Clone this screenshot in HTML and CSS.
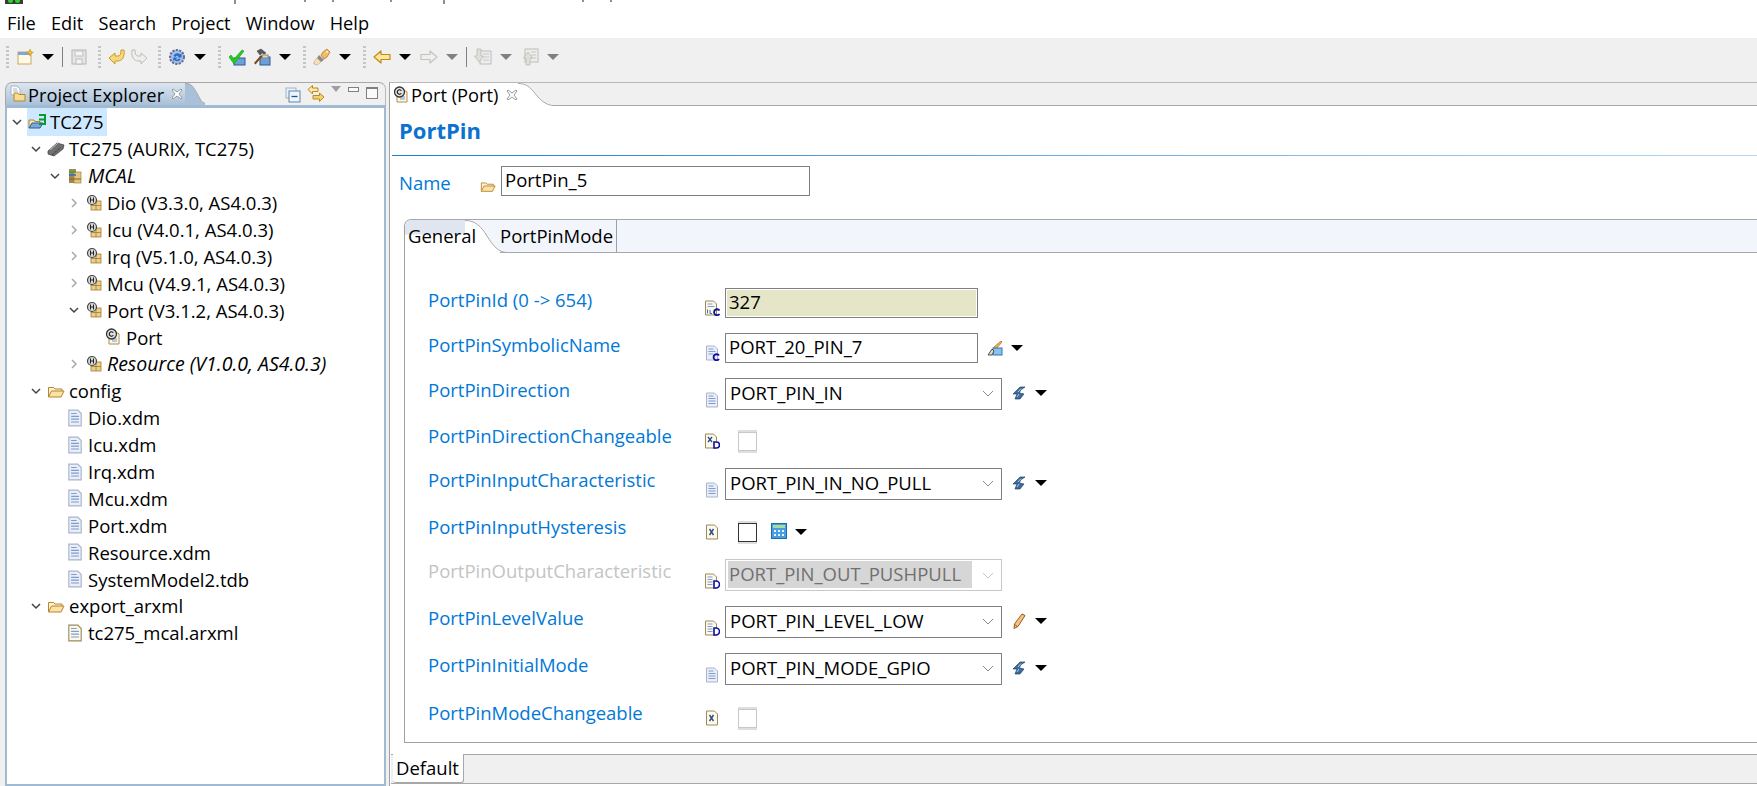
FILE: index.html
```html
<!DOCTYPE html>
<html lang="en">
<head>
<meta charset="utf-8">
<title>Port (Port)</title>
<link rel="stylesheet" href="styles.css">
</head>
<body>
<svg class="defs" aria-hidden="true">
  <defs>
    <symbol id="i-new" viewBox="0 0 18 18"><rect x="2" y="4" width="13" height="12" fill="#fff9e6" stroke="#c9a95a"/><rect x="2" y="4" width="13" height="3" fill="#7fa8d8"/><path d="M14 1l1 2.500 2.500 1-2.500 1-1 2.500-1-2.500-2.500-1 2.500-1z" fill="#f2c230" stroke="#b88a10" stroke-width=".5"/></symbol>
    <symbol id="i-save" viewBox="0 0 18 18"><rect x="2" y="2" width="14" height="14" fill="#e6e6e6" stroke="#b5b5b5"/><rect x="5" y="3" width="8" height="5" fill="#f4f4f4" stroke="#c0c0c0"/><rect x="6" y="11" width="6" height="5" fill="#f4f4f4" stroke="#bbb"/></symbol>
    <symbol id="i-undo" viewBox="0 0 18 18"><path d="M1 10l6-5v3h3c2 0 3-2 3-6h3c1 7-2 11-6 11H7v3z" fill="#f7d87a" stroke="#c99a28" stroke-linejoin="round"/></symbol>
    <symbol id="i-redo" viewBox="0 0 18 18"><path d="M17 10l-6-5v3H8C6 8 5 6 5 2H2c-1 7 2 11 6 11h3v3z" fill="#eeeeee" stroke="#bdbdb5" stroke-linejoin="round"/></symbol>
    <symbol id="i-globe" viewBox="0 0 18 18"><circle cx="9" cy="9" r="7" fill="#a8b8dc" stroke="#5c6e9c" stroke-width="2" stroke-dasharray="2.200 1.300"/><circle cx="9" cy="9" r="5.500" fill="#aebce0"/><path d="M5.500 8c1-3 5-3.500 6.500-1.500l1.500-1.200v4.200H9.300l1.300-1.300C9.600 7.300 8 7.500 7.500 9zM12.500 11c-1 2.500-4 3-6 1l-1.200 1.200V9.500h4L8 11c1 1 2.300.6 3-.5z" fill="#1f70c8"/></symbol>
    <symbol id="i-check" viewBox="0 0 18 18"><rect x="6" y="10" width="11" height="7" fill="#6f9fd8" stroke="#2c5c98"/><path d="M1 9l2-2 3 4 8-9 2 1-10 13z" fill="#22cc22" stroke="#1a9a1a" stroke-width=".6"/></symbol>
    <symbol id="i-hammer" viewBox="0 0 18 18"><rect x="7" y="9" width="10" height="8" fill="#6f9fd8" stroke="#2c5c98"/><rect x="9" y="7" width="6" height="3" fill="#e8d8b0" stroke="#888"/><path d="M1 15l7-8 1.500 1.500-7 8z" fill="#7a4a1c"/><path d="M4 3l4-2 5 4-2 1-2-1-2 2z" fill="#5a5a5a" stroke="#333" stroke-width=".5"/></symbol>
    <symbol id="i-wand" viewBox="0 0 18 18"><path d="M10 4l4-3 3 3-3 5-3 2-3-4z" fill="#f0bd68" stroke="#b87818" stroke-width=".8"/><path d="M6 7l5 5-3 2-4-4z" fill="#8a8a8a"/><path d="M4 10l4 4-4 3-3-1v-2z" fill="#f3e0c0" stroke="#b8a070" stroke-width=".6"/><circle cx="14" cy="4" r="1" fill="#fff3d0"/></symbol>
    <symbol id="i-back" viewBox="0 0 18 18"><path d="M1 9l7-6v3.500h9v5H8V15z" fill="#fbe6a0" stroke="#c08a18" stroke-width="1.200" stroke-linejoin="round"/></symbol>
    <symbol id="i-fwd" viewBox="0 0 18 18"><path d="M17 9l-7-6v3.500H1v5h9V15z" fill="#efefef" stroke="#c4c4bc" stroke-width="1.200" stroke-linejoin="round"/></symbol>
    <symbol id="i-next" viewBox="0 0 18 18"><rect x="6" y="3" width="11" height="13" fill="#ededed" stroke="#bcbcbc"/><path d="M9 6h6M9 9h6M9 12h6" stroke="#c8c8c8"/><path d="M3 1h4v7h2.500L5 14 .5 8H3z" fill="#e0e0da" stroke="#bbbbb0" stroke-width=".8"/></symbol>
    <symbol id="i-prev" viewBox="0 0 18 18"><rect x="4" y="1" width="13" height="13" fill="#ededed" stroke="#bcbcbc"/><path d="M10 4h5M10 7h5M10 10h5" stroke="#c8c8c8"/><path d="M5 17V10H2.500L7 4l4.500 6H9v7z" fill="#e0e0da" stroke="#bbbbb0" stroke-width=".8"/></symbol>
    <symbol id="i-explorer" viewBox="0 0 18 18"><path d="M2 1h6l3 3v6H2z" fill="#fff" stroke="#b0b0b8"/><path d="M4 4h4M4 6h5" stroke="#a8b8d0"/><path d="M5 8h4l1 1.500h6V16H5z" fill="#f8dc90" stroke="#b08830"/></symbol>
    <symbol id="i-folder" viewBox="0 0 18 18"><path d="M1.500 15V5.500h5l1.500 1.500h7v2" fill="#fdf3d2" stroke="#b8842c"/><path d="M1.500 15l3-6h12.500l-3 6z" fill="#fbe3a8" stroke="#b8842c" stroke-linejoin="round"/></symbol>
    <symbol id="i-project" viewBox="0 0 18 18"><path d="M1 15V7h5l1 1.500h5v2" fill="#f8e8b8" stroke="#a88434"/><path d="M1 15l3-5h11l-3 5z" fill="#7aa8dc" stroke="#2f5c98" stroke-linejoin="round"/><path d="M11 2h6v9h-6" fill="none" stroke="#0a9a30" stroke-width="2"/><path d="M11 6.500h5" stroke="#0a9a30" stroke-width="2"/></symbol>
    <symbol id="i-chip" viewBox="0 0 18 18"><path d="M1 11l9-8 7 2-1 4-9 7-6-2z" fill="#707070" stroke="#3a3a3a" stroke-width=".7"/><path d="M3 10l8-7" stroke="#c0c0c0"/><path d="M5 15l9-8" stroke="#222" stroke-dasharray="1 1"/></symbol>
    <symbol id="i-mcal" viewBox="0 0 18 18"><rect x="3" y="2" width="7" height="14" fill="#a08a50"/><rect x="8" y="5" width="7" height="11" fill="#e2c480" stroke="#a08040" stroke-width=".7"/><path d="M3 5h7" stroke="#3aa03a" stroke-width="1.500"/><path d="M3 8h7" stroke="#3868c0" stroke-width="1.500"/><path d="M3 12h12" stroke="#806030"/></symbol>
    <symbol id="i-module" viewBox="0 0 18 18"><rect x="6" y="7" width="10" height="9" fill="#eccd8c" stroke="#a07c30" stroke-width=".8"/><path d="M6 11.500h10M11 7v9" stroke="#a07c30" stroke-width=".8"/><circle cx="7" cy="6" r="4.500" fill="#d8d8d8" stroke="#444" stroke-width="1.200"/><path d="M5.500 3.500v5M8.500 3.500v5M5.500 6h3" stroke="#222"/></symbol>
    <symbol id="i-config" viewBox="0 0 18 18"><path d="M5 5h9l1 1v10H5z" fill="#fff8e4" stroke="#a89058"/><path d="M8 11h5M8 13h5" stroke="#7898c8"/><circle cx="7.500" cy="6" r="5" fill="#e0e0e0" stroke="#333" stroke-width="1.300"/><path d="M9.300 4.800a2.200 2.200 0 1 0 0 2.400" fill="none" stroke="#111" stroke-width="1.100"/></symbol>
    <symbol id="i-close" viewBox="0 0 12 12"><path d="M2 1l4 3 4-3 1 1-3 4 3 4-1 1-4-3-4 3-1-1 3-4-3-4z" fill="#fff" stroke="#909090" stroke-width=".9" stroke-linejoin="round"/></symbol>
    <symbol id="i-doc" viewBox="0 0 16 16"><path d="M2.500 1h8l3 3v11h-11z" fill="#e9eef8" stroke="#a8b4cc"/><path d="M4.500 4h5M4.500 6.500h7M4.500 9h7M4.500 11.500h7" stroke="#7f9ccb"/></symbol>
    <symbol id="i-docb" viewBox="0 0 16 16"><path d="M2.500 1h8l3 3v11h-11z" fill="#fbf8ec" stroke="#9c8a58"/><path d="M4.500 4h5M4.500 6.500h7M4.500 9h7M4.500 11.500h7" stroke="#7f9ccb"/></symbol>
    <symbol id="i-c" viewBox="0 0 16 16"><path d="M2.500 1h8l3 3v11h-11z" fill="#e9eef8" stroke="#a8b4cc"/><path d="M4.500 4h5M4.500 6.500h7M4.500 9h5" stroke="#7f9ccb"/><path d="M15 10.500a3 3 0 1 0 0 3.500" fill="none" stroke="#10109c" stroke-width="1.800"/></symbol>
    <symbol id="i-1ac" viewBox="0 0 16 16"><path d="M1.500 1h8l3 3v11h-11z" fill="#fbf8ec" stroke="#9c8a58"/><path d="M3.500 4h5M3.500 6.500h7" stroke="#7f9ccb"/><path d="M3.500 9.500v4M6 10v3.500h2" stroke="#4a6ca8" fill="none"/><path d="M15.500 10.500a3 3 0 1 0 0 3.500" fill="none" stroke="#10109c" stroke-width="1.800"/></symbol>
    <symbol id="i-xd" viewBox="0 0 16 16"><path d="M1.500 1h8l3 3v11h-11z" fill="#fbf8ec" stroke="#9c8a58"/><path d="M4 4l4 5M8 4l-4 5" stroke="#2a4a80" stroke-width="1.300"/><path d="M10 9h2.500a3 3 0 0 1 0 6H10z" fill="#fff" stroke="#10109c" stroke-width="1.600"/></symbol>
    <symbol id="i-dd" viewBox="0 0 16 16"><path d="M1.500 1h8l3 3v11h-11z" fill="#fbf8ec" stroke="#9c8a58"/><path d="M3.500 4h5M3.500 6.500h5M3.500 9h5M3.500 11.500h5" stroke="#7f9ccb"/><path d="M10 8h2a3.200 3.200 0 0 1 0 7h-2z" fill="#fff" stroke="#10109c" stroke-width="1.600"/></symbol>
    <symbol id="i-x" viewBox="0 0 16 16"><path d="M2.500 1h8l3 3v11h-11z" fill="#fbf8ec" stroke="#9c8a58"/><path d="M5.500 5l4 6M9.500 5l-4 6" stroke="#2a4a80" stroke-width="1.400"/></symbol>
    <symbol id="i-flame" viewBox="0 0 16 16"><path d="M14 2H9L6 5 2 9h4L4 14h5l4-5-4.500-1 1-3z" fill="#3c6a9c" stroke="#20466e" stroke-width=".7" stroke-linejoin="round"/><path d="M10 3.500L7 7M6 12l2-3" stroke="#b4cce4" fill="none"/></symbol>
    <symbol id="i-tool" viewBox="0 0 16 16"><path d="M14 1l1 1-6 7-3 1 1-3z" fill="#f0b060" stroke="#a86818" stroke-width=".7"/><rect x="6" y="8" width="9" height="7" fill="#8fc0e8" stroke="#2878b8"/><path d="M1 15l4-6 2 2-2 4z" fill="#f3d8a0" stroke="#203060" stroke-width=".8"/></symbol>
    <symbol id="i-calc" viewBox="0 0 16 16"><rect x=".5" y=".5" width="15" height="15" fill="#4a9ee0" stroke="#1c6cb4"/><rect x="2" y="2" width="12" height="3" fill="#a8dc9c"/><path d="M3 7h2v2H3zM7 7h2v2H7zM11 7h2v2h-2zM3 11h2v2H3zM7 11h2v2H7zM11 11h2v2h-2z" fill="#e8f4fc"/></symbol>
    <symbol id="i-pencil" viewBox="0 0 16 16"><path d="M11 1l3 1.500-7 11-4 2 .5-4.500z" fill="#f2c48a" stroke="#9a5a18" stroke-width="1"/><path d="M3.500 11.500l3 2" stroke="#9a5a18"/></symbol>
    <symbol id="i-collapse" viewBox="0 0 16 16"><rect x="1" y="1" width="10" height="10" fill="#eaf1f8" stroke="#9db4cc"/><rect x="4" y="4" width="11" height="11" fill="#eef4fa" stroke="#5f86ae"/><path d="M6.500 9.500h6" stroke="#1c5488" stroke-width="1.300"/></symbol>
    <symbol id="i-link" viewBox="0 0 18 18"><path d="M1 4.500l4.500-4v2.500H11v3.500H5.500v2.500z" fill="#fbe8b0" stroke="#b88a1c"/><path d="M17 12l-4.500-4v2.500H6V14h6.500v2.500z" fill="#f5d070" stroke="#b88a1c"/></symbol>
  </defs>
</svg>

<div class="title-strip">
  <span class="app-icon"><i class="app-dot"></i><i class="app-dot"></i></span>
  <svg class="title-ticks" width="640" height="4" aria-hidden="true"><path d="M235 0v4M305 0v2M333 0v2M391 0v2M444 0v4M583 0v2M611 0v2" stroke="#202020"/></svg>
</div>

<nav class="menubar">
  <span>File</span><span>Edit</span><span>Search</span><span>Project</span><span>Window</span><span>Help</span>
</nav>

<div class="toolbar">
  <i class="grip"></i>
  <svg class="icon"><use href="#i-new"/></svg><i class="arrow"></i><i class="sep"></i>
  <svg class="icon"><use href="#i-save"/></svg><i class="grip"></i>
  <svg class="icon"><use href="#i-undo"/></svg><svg class="icon"><use href="#i-redo"/></svg><i class="grip"></i>
  <svg class="icon"><use href="#i-globe"/></svg><i class="arrow"></i><i class="grip"></i>
  <svg class="icon"><use href="#i-check"/></svg><svg class="icon wide"><use href="#i-hammer"/></svg><i class="arrow"></i><i class="grip"></i>
  <svg class="icon"><use href="#i-wand"/></svg><i class="arrow"></i><i class="grip"></i>
  <svg class="icon"><use href="#i-back"/></svg><i class="arrow"></i>
  <svg class="icon"><use href="#i-fwd"/></svg><i class="arrow off"></i><i class="sep"></i>
  <svg class="icon"><use href="#i-next"/></svg><i class="arrow off"></i>
  <svg class="icon"><use href="#i-prev"/></svg><i class="arrow off"></i>
</div>

<main class="workbench">
  <section class="explorer">
    <header class="explorer-head">
      <div class="explorer-tab">
        <svg class="tab-icon"><use href="#i-explorer"/></svg>
        <span class="tab-text">Project Explorer</span>
        <svg class="tab-close"><use href="#i-close"/></svg>
      </div>
      <svg class="explorer-curve" viewBox="0 0 24 23" preserveAspectRatio="none" aria-hidden="true"><path d="M0 0C8 0 10 4 14 10S20 21 24 21V23H0z" fill="#a9c0d8"/><path d="M0 .5C8 .5 10 4 14 10S20 21 24 21" fill="none" stroke="#a8a8a8"/></svg>
      <div class="view-tools">
        <svg class="vt vt-collapse"><use href="#i-collapse"/></svg>
        <svg class="vt vt-link"><use href="#i-link"/></svg>
        <i class="vt-menu"></i>
        <i class="vt-min"></i>
        <i class="vt-max"></i>
      </div>
    </header>
    <div class="tree">
      <div class="row l0"><svg class="tw"><path d="M1 3l4 4 4-4" /></svg><span class="selected"><svg class="ti"><use href="#i-project"/></svg><span>TC275</span></span></div>
      <div class="row l1"><svg class="tw"><path d="M1 3l4 4 4-4" /></svg><svg class="ti"><use href="#i-chip"/></svg><span>TC275 (AURIX, TC275)</span></div>
      <div class="row l2"><svg class="tw"><path d="M1 3l4 4 4-4" /></svg><svg class="ti"><use href="#i-mcal"/></svg><em>MCAL</em></div>
      <div class="row l3"><svg class="tw shut"><path d="M3 1l4 4-4 4" /></svg><svg class="ti"><use href="#i-module"/></svg><span>Dio (V3.3.0, AS4.0.3)</span></div>
      <div class="row l3"><svg class="tw shut"><path d="M3 1l4 4-4 4" /></svg><svg class="ti"><use href="#i-module"/></svg><span>Icu (V4.0.1, AS4.0.3)</span></div>
      <div class="row l3"><svg class="tw shut"><path d="M3 1l4 4-4 4" /></svg><svg class="ti"><use href="#i-module"/></svg><span>Irq (V5.1.0, AS4.0.3)</span></div>
      <div class="row l3"><svg class="tw shut"><path d="M3 1l4 4-4 4" /></svg><svg class="ti"><use href="#i-module"/></svg><span>Mcu (V4.9.1, AS4.0.3)</span></div>
      <div class="row l3"><svg class="tw"><path d="M1 3l4 4 4-4" /></svg><svg class="ti"><use href="#i-module"/></svg><span>Port (V3.1.2, AS4.0.3)</span></div>
      <div class="row l4"><i class="tw-gap"></i><svg class="ti"><use href="#i-config"/></svg><span>Port</span></div>
      <div class="row l3"><svg class="tw shut"><path d="M3 1l4 4-4 4" /></svg><svg class="ti"><use href="#i-module"/></svg><em>Resource (V1.0.0, AS4.0.3)</em></div>
      <div class="row l1"><svg class="tw"><path d="M1 3l4 4 4-4" /></svg><svg class="ti"><use href="#i-folder"/></svg><span>config</span></div>
      <div class="row l2"><i class="tw-gap"></i><svg class="ti"><use href="#i-doc"/></svg><span>Dio.xdm</span></div>
      <div class="row l2"><i class="tw-gap"></i><svg class="ti"><use href="#i-doc"/></svg><span>Icu.xdm</span></div>
      <div class="row l2"><i class="tw-gap"></i><svg class="ti"><use href="#i-doc"/></svg><span>Irq.xdm</span></div>
      <div class="row l2"><i class="tw-gap"></i><svg class="ti"><use href="#i-doc"/></svg><span>Mcu.xdm</span></div>
      <div class="row l2"><i class="tw-gap"></i><svg class="ti"><use href="#i-doc"/></svg><span>Port.xdm</span></div>
      <div class="row l2"><i class="tw-gap"></i><svg class="ti"><use href="#i-doc"/></svg><span>Resource.xdm</span></div>
      <div class="row l2"><i class="tw-gap"></i><svg class="ti"><use href="#i-doc"/></svg><span>SystemModel2.tdb</span></div>
      <div class="row l1"><svg class="tw"><path d="M1 3l4 4 4-4" /></svg><svg class="ti"><use href="#i-folder"/></svg><span>export_arxml</span></div>
      <div class="row l2"><i class="tw-gap"></i><svg class="ti"><use href="#i-docb"/></svg><span>tc275_mcal.arxml</span></div>
    </div>
  </section>

  <section class="editor">
    <header class="editor-head">
      <div class="editor-tab">
        <svg class="tab-icon"><use href="#i-config"/></svg>
        <span class="tab-text">Port (Port)</span>
        <svg class="tab-close"><use href="#i-close"/></svg>
      </div>
      <svg class="editor-curve" viewBox="0 0 36 24" preserveAspectRatio="none" aria-hidden="true"><path d="M0 0C8 0 12 4 18 12S30 23.500 36 23.500V24H0z" fill="#fff"/><path d="M0 .5C8 .5 12 4 18 12S30 23.500 36 23.500" fill="none" stroke="#a8a8a8"/></svg>
      <div class="editor-rest"></div>
    </header>
    <div class="editor-body">
      <h1 class="form-title">PortPin</h1>
      <div class="title-rule"></div>
      <div class="name-row">
        <label class="name-label">Name</label>
        <svg class="name-icon"><use href="#i-folder"/></svg>
        <div class="field name-field">PortPin_5</div>
      </div>
      <div class="folder">
        <div class="folder-tabs">
          <div class="ftab-active"><span class="ftab-label">General</span></div>
          <svg class="ftab-curve" viewBox="0 0 42 33" preserveAspectRatio="none" aria-hidden="true"><path d="M0 0C10 0 16 6 22 16S34 32.500 42 32.500V33H0z" fill="#fff"/><path d="M0 0H42V32.500C34 32.500 28 26 22 16S10 0 0 0z" fill="#f2f6fc"/><path d="M0 .5C10 .5 16 6 22 16S34 32.500 42 32.500" fill="none" stroke="#a8a8a8"/></svg>
          <div class="ftab">PortPinMode</div>
          <div class="ftab-rest"></div>
        </div>
        <div class="form">
          <div class="form-row">
            <label>PortPinId (0 -&gt; 654)</label>
            <svg class="ficon"><use href="#i-1ac"/></svg>
            <div class="controls"><div class="field ro">327</div></div>
          </div>
          <div class="form-row">
            <label>PortPinSymbolicName</label>
            <svg class="ficon"><use href="#i-c"/></svg>
            <div class="controls"><div class="field">PORT_20_PIN_7</div><svg class="tool"><use href="#i-tool"/></svg><i class="arrow"></i></div>
          </div>
          <div class="form-row">
            <label>PortPinDirection</label>
            <svg class="ficon low"><use href="#i-doc"/></svg>
            <div class="controls"><div class="combo">PORT_PIN_IN<svg class="chev"><path d="M1 1l5 5 5-5"/></svg></div><svg class="tool"><use href="#i-flame"/></svg><i class="arrow"></i></div>
          </div>
          <div class="form-row">
            <label class="lbl-check">PortPinDirectionChangeable</label>
            <svg class="ficon high"><use href="#i-xd"/></svg>
            <div class="controls"><span class="check off"><i></i></span></div>
          </div>
          <div class="form-row">
            <label>PortPinInputCharacteristic</label>
            <svg class="ficon low"><use href="#i-doc"/></svg>
            <div class="controls"><div class="combo">PORT_PIN_IN_NO_PULL<svg class="chev"><path d="M1 1l5 5 5-5"/></svg></div><svg class="tool"><use href="#i-flame"/></svg><i class="arrow"></i></div>
          </div>
          <div class="form-row">
            <label class="lbl-check">PortPinInputHysteresis</label>
            <svg class="ficon high"><use href="#i-x"/></svg>
            <div class="controls"><span class="check"><i></i></span><svg class="tool calc"><use href="#i-calc"/></svg><i class="arrow"></i></div>
          </div>
          <div class="form-row disabled">
            <label>PortPinOutputCharacteristic</label>
            <svg class="ficon low"><use href="#i-dd"/></svg>
            <div class="controls"><div class="combo"><span class="sel-text">PORT_PIN_OUT_PUSHPULL</span><svg class="chev"><path d="M1 1l5 5 5-5"/></svg></div></div>
          </div>
          <div class="form-row">
            <label>PortPinLevelValue</label>
            <svg class="ficon low"><use href="#i-dd"/></svg>
            <div class="controls"><div class="combo">PORT_PIN_LEVEL_LOW<svg class="chev"><path d="M1 1l5 5 5-5"/></svg></div><svg class="tool"><use href="#i-pencil"/></svg><i class="arrow"></i></div>
          </div>
          <div class="form-row">
            <label>PortPinInitialMode</label>
            <svg class="ficon low"><use href="#i-doc"/></svg>
            <div class="controls"><div class="combo">PORT_PIN_MODE_GPIO<svg class="chev"><path d="M1 1l5 5 5-5"/></svg></div><svg class="tool"><use href="#i-flame"/></svg><i class="arrow"></i></div>
          </div>
          <div class="form-row">
            <label class="lbl-check">PortPinModeChangeable</label>
            <svg class="ficon high"><use href="#i-x"/></svg>
            <div class="controls"><span class="check off"><i></i></span></div>
          </div>
        </div>
      </div>
      <div class="page-tabs"><div class="page-tab">Default</div></div>
    </div>
  </section>
</main>
</body>
</html>
```

FILE: styles.css
```css
* { box-sizing: border-box; }
html, body { margin: 0; padding: 0; }
body {
  width: 1757px;
  height: 786px;
  overflow: hidden;
  background: #f0f0f0;
  color: #000;
  font-family: "Open Sans", "Noto Sans", sans-serif;
  font-size: 18.500px;
}
i { display: block; font-style: normal; }
svg { display: block; flex: none; }
.defs { position: absolute; width: 0; height: 0; }

/* top of the window */
.title-strip { height: 4px; background: #fff; display: flex; position: relative; overflow: hidden; }
.app-icon { width: 18px; height: 5px; margin-left: 5px; background: #3a3a3a; display: flex; justify-content: center; gap: 2px; }
.app-dot { width: 5px; height: 3px; background: #2ad02a; border-radius: 0 0 3px 3px; }
.title-ticks { margin-left: -23px; }
.menubar {
  height: 34px;
  background: #fff;
  display: flex;
  align-items: center;
  gap: 15.200px;
  padding: 4px 0 0 7px;
  font-size: 18.200px;
}

/* toolbar */
.toolbar { height: 44px; padding: 0 0 6px 6px; display: flex; align-items: center; background: #f0f0f0; }
.grip {
  width: 3px;
  height: 22px;
  margin-left: 12px;
  background: repeating-linear-gradient(to bottom, #c4c4c4 0 2px, #f0f0f0 2px 4px);
}
.grip:first-child { margin-left: 0; }
.icon { width: 18px; height: 18px; margin-left: 4px; }
.icon.wide { margin-left: 7px; }
.grip + .icon, .sep + .icon { margin-left: 7px; }
.icon + .grip { margin-left: 10px; }
.arrow {
  width: 0;
  height: 0;
  flex: none;
  border-left: 6px solid transparent;
  border-right: 6px solid transparent;
  border-top: 6px solid #000;
}
.arrow.off { border-top-color: #808080; }
.icon + .arrow { margin-left: 8px; }
.arrow + .icon { margin-left: 9px; }
.sep { width: 1px; height: 20px; margin-left: 8px; background: #808080; }

/* panes */
.workbench { height: 704px; display: flex; align-items: stretch; padding-left: 5px; }
.explorer { width: 381px; display: flex; flex-direction: column; }
.explorer-head { height: 26px; display: flex; border-top: 1px solid #a8a8a8; border-bottom: 3px solid #a0bad4; border-radius: 7px 7px 0 0; border-right: 1px solid #b8b8b8; position: relative; }
.explorer-tab {
  width: 180px;
  display: flex;
  align-items: center;
  background: linear-gradient(to bottom, #dce6f0, #a9c0d8);
  border-left: 1px solid #a8a8a8;
  border-radius: 7px 0 0 0;
  padding-left: 3px;
}
.tab-icon { width: 18px; height: 18px; }
.tab-text { margin-left: 1px; white-space: nowrap; font-size: 18.300px; }
.tab-close { width: 12px; height: 12px; margin-left: 7px; }
.explorer-curve { width: 20px; height: 22px; }
.view-tools { flex: 1; display: flex; align-items: flex-start; position: relative; }
.vt { width: 16px; height: 16px; margin-top: 4px; }
.vt-collapse { margin-left: 80px; }
.vt-link { width: 18px; height: 18px; margin-top: 2px; margin-left: 6px; }
.vt-menu { width: 0; height: 0; margin: 3px 0 0 6px; border-left: 5px solid transparent; border-right: 5px solid transparent; border-top: 6px solid #a0a0a0; position: relative; }
.vt-min { width: 11px; height: 5px; margin: 4px 0 0 7px; border: 1px solid #808080; background: #fafafa; }
.vt-max { width: 12px; height: 12px; margin: 4px 0 0 7px; border: 1px solid #808080; border-top-width: 2px; background: #fafafa; }

.tree { flex: 1; background: #fff; border: 2px solid #a0bad4; border-top: 0; padding-top: .5px; }
.row { height: 26.900px; display: flex; align-items: center; white-space: nowrap; }
.row em { font-style: italic; font-size: 19.500px; }
.tw { width: 10px; height: 10px; margin-right: 6px; fill: none; stroke: #444; stroke-width: 1.500; }
.tw.shut { stroke: #a8a8a8; }
.tw-gap { width: 16px; }
.ti { width: 18px; height: 18px; margin-right: 4px; }
.l0 { padding-left: 5px; }
.l1 { padding-left: 24px; }
.l2 { padding-left: 43px; }
.l3 { padding-left: 62px; }
.l4 { padding-left: 81px; }
.selected { display: flex; align-items: center; height: 29px; background: #cde8ff; margin-left: -1px; width: 80px; }
.selected .ti { margin-left: 1px; }

/* editor */
.editor { margin-left: 3px; flex: 1; display: flex; flex-direction: column; min-width: 0; border-left: 1px solid #a0a0a0; }
.editor-head { height: 24px; display: flex; border-top: 1px solid #b8b8b8; }
.editor-tab { width: 128px; background: #fff; display: flex; align-items: center; padding-left: 2px; }
.editor-curve { width: 36px; height: 23px; }
.editor-rest { flex: 1; border-bottom: 1px solid #a8a8a8; }
.editor-body { flex: 1; background: #fff; display: flex; flex-direction: column; min-height: 0; }
.form-title { margin: 0; height: 49px; padding: 9px 0 0 9px; font-size: 22px; line-height: 30px; font-weight: 700; color: #0b72d0; }
.title-rule { height: 1px; margin-left: 2px; background: linear-gradient(to right, #1f80cf, #b8d8f0); }
.name-row { display: flex; padding: 10px 0 0 9px; height: 40px; }
.name-label { width: 81px; margin-top: 2px; line-height: 30px; color: #0078d7; }
.name-icon { width: 16px; height: 16px; margin: 12px 5px 0 0; }
.field {
  width: 253px;
  height: 30px;
  flex: none;
  border: 1px solid #808080;
  background: #fff;
  padding-left: 3px;
  line-height: 26px;
  white-space: nowrap;
}
.name-field { width: 309px; }
.ro { background: #e5e5c8; box-shadow: inset 0 0 0 1px #fff; }

/* folder */
.folder { margin: 23px 0 0 14px; height: 524px; display: flex; flex-direction: column; border-left: 1px solid #a0a0a0; border-bottom: 1px solid #a0a0a0; border-top: 1px solid #a8a8a8; border-radius: 7px 0 0 0; }
.folder-tabs { height: 32px; display: flex; flex: none; }
.ftab-active { width: 60px; padding-left: 3px; line-height: 32px; background: linear-gradient(to bottom, #dfe6ef 0, #dfe6ef 14px, #fff 15px); border-radius: 7px 0 0 0; white-space: nowrap; position: relative; z-index: 1; }
.ftab-curve { width: 42px; height: 33px; }
.ftab { width: 117px; margin-left: -7px; line-height: 32px; border-right: 1px solid #a0a0a0; border-bottom: 1px solid #a8a8a8; white-space: nowrap; height: 33px; background: linear-gradient(to right, transparent 7px, #f2f6fc 7px); }
.ftab-rest { flex: 1; height: 33px; background: #f2f6fc; border-bottom: 1px solid #a8a8a8; }
.form { padding: 36px 0 0 23px; display: grid; grid-template-rows: 45px 45px 45px 45px 46px 45px 47px 47px 47px 47px; }
.form-row { display: grid; grid-template-columns: 276px 21px 1fr; align-items: start; }
.form-row label { line-height: 24px; color: #0078d7; white-space: nowrap; }
.form-row .lbl-check { margin-top: 1px; }
.ficon { width: 16px; height: 16px; margin-top: 12px; }
.ficon.low { margin-top: 14px; }
.ficon.high { margin-top: 10px; }
.controls { display: flex; align-items: flex-start; }
.combo {
  width: 277px;
  height: 32px;
  flex: none;
  border: 1px solid #808080;
  background: #fff;
  padding-left: 4px;
  line-height: 28px;
  display: flex;
  justify-content: space-between;
  white-space: nowrap;
}
.chev { width: 12px; height: 8px; margin: 11px 7px 0 0; fill: none; stroke: #8a8a8a; stroke-width: 1; }
.tool { width: 16px; height: 16px; margin: 7px 0 0 9px; }
.controls .arrow { margin: 12px 0 0 8px; }
.check { width: 19px; height: 23px; margin: 7px 0 0 13px; padding: 2px 0; background: #dedede; display: block; flex: none; }
.check i { height: 19px; background: #fff; border: 1.500px solid #333; }
.check.off i { border-color: #c8c8c8; }
.calc { margin: 9px 0 0 14px; }
.calc + .arrow { margin-top: 15px; }

.disabled label { color: #c4c4c4; }
.disabled .combo { border-color: #c8c8c8; color: #707070; padding: 1px 0 0 2px; line-height: 26px; }
.sel-text { width: 244px; height: 27px; background: #d6d6d6; padding-left: 1px; }
.disabled .chev { stroke: #c8c8c8; }

.page-tabs { margin-top: 11px; height: 30px; display: flex; background: #f0f0f0; border-top: 1px solid #a8a8a8; border-bottom: 1px solid #a8a8a8; margin-left: 1px; }
.page-tab { width: 71px; margin-left: 2px; margin-top: -1px; height: 29px; background: #fff; border-right: 1px solid #a8a8a8; border-bottom: 1px solid #a8a8a8; border-radius: 0 0 3px 3px; padding-left: 3px; line-height: 28px; }
```
